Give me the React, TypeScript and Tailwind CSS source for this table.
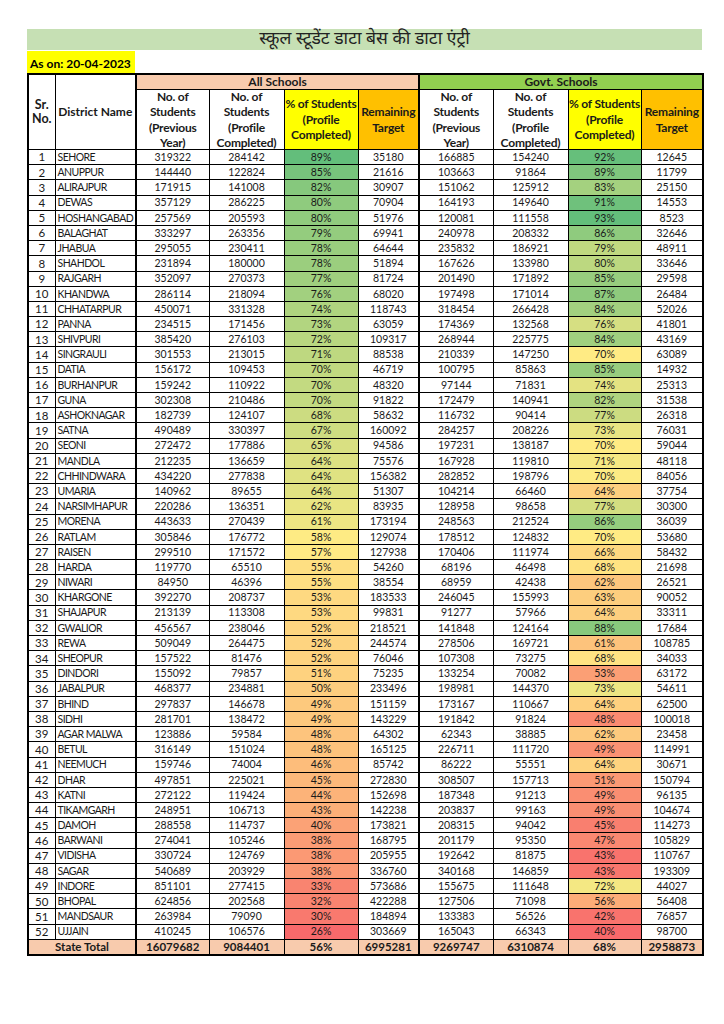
import React from "react";

type Row = [number, string, number, number, number, number, number, number, number, number];

const DATA: Row[] = [
  [1, "SEHORE", 319322, 284142, 89, 35180, 166885, 154240, 92, 12645],
  [2, "ANUPPUR", 144440, 122824, 85, 21616, 103663, 91864, 89, 11799],
  [3, "ALIRAJPUR", 171915, 141008, 82, 30907, 151062, 125912, 83, 25150],
  [4, "DEWAS", 357129, 286225, 80, 70904, 164193, 149640, 91, 14553],
  [5, "HOSHANGABAD", 257569, 205593, 80, 51976, 120081, 111558, 93, 8523],
  [6, "BALAGHAT", 333297, 263356, 79, 69941, 240978, 208332, 86, 32646],
  [7, "JHABUA", 295055, 230411, 78, 64644, 235832, 186921, 79, 48911],
  [8, "SHAHDOL", 231894, 180000, 78, 51894, 167626, 133980, 80, 33646],
  [9, "RAJGARH", 352097, 270373, 77, 81724, 201490, 171892, 85, 29598],
  [10, "KHANDWA", 286114, 218094, 76, 68020, 197498, 171014, 87, 26484],
  [11, "CHHATARPUR", 450071, 331328, 74, 118743, 318454, 266428, 84, 52026],
  [12, "PANNA", 234515, 171456, 73, 63059, 174369, 132568, 76, 41801],
  [13, "SHIVPURI", 385420, 276103, 72, 109317, 268944, 225775, 84, 43169],
  [14, "SINGRAULI", 301553, 213015, 71, 88538, 210339, 147250, 70, 63089],
  [15, "DATIA", 156172, 109453, 70, 46719, 100795, 85863, 85, 14932],
  [16, "BURHANPUR", 159242, 110922, 70, 48320, 97144, 71831, 74, 25313],
  [17, "GUNA", 302308, 210486, 70, 91822, 172479, 140941, 82, 31538],
  [18, "ASHOKNAGAR", 182739, 124107, 68, 58632, 116732, 90414, 77, 26318],
  [19, "SATNA", 490489, 330397, 67, 160092, 284257, 208226, 73, 76031],
  [20, "SEONI", 272472, 177886, 65, 94586, 197231, 138187, 70, 59044],
  [21, "MANDLA", 212235, 136659, 64, 75576, 167928, 119810, 71, 48118],
  [22, "CHHINDWARA", 434220, 277838, 64, 156382, 282852, 198796, 70, 84056],
  [23, "UMARIA", 140962, 89655, 64, 51307, 104214, 66460, 64, 37754],
  [24, "NARSIMHAPUR", 220286, 136351, 62, 83935, 128958, 98658, 77, 30300],
  [25, "MORENA", 443633, 270439, 61, 173194, 248563, 212524, 86, 36039],
  [26, "RATLAM", 305846, 176772, 58, 129074, 178512, 124832, 70, 53680],
  [27, "RAISEN", 299510, 171572, 57, 127938, 170406, 111974, 66, 58432],
  [28, "HARDA", 119770, 65510, 55, 54260, 68196, 46498, 68, 21698],
  [29, "NIWARI", 84950, 46396, 55, 38554, 68959, 42438, 62, 26521],
  [30, "KHARGONE", 392270, 208737, 53, 183533, 246045, 155993, 63, 90052],
  [31, "SHAJAPUR", 213139, 113308, 53, 99831, 91277, 57966, 64, 33311],
  [32, "GWALIOR", 456567, 238046, 52, 218521, 141848, 124164, 88, 17684],
  [33, "REWA", 509049, 264475, 52, 244574, 278506, 169721, 61, 108785],
  [34, "SHEOPUR", 157522, 81476, 52, 76046, 107308, 73275, 68, 34033],
  [35, "DINDORI", 155092, 79857, 51, 75235, 133254, 70082, 53, 63172],
  [36, "JABALPUR", 468377, 234881, 50, 233496, 198981, 144370, 73, 54611],
  [37, "BHIND", 297837, 146678, 49, 151159, 173167, 110667, 64, 62500],
  [38, "SIDHI", 281701, 138472, 49, 143229, 191842, 91824, 48, 100018],
  [39, "AGAR MALWA", 123886, 59584, 48, 64302, 62343, 38885, 62, 23458],
  [40, "BETUL", 316149, 151024, 48, 165125, 226711, 111720, 49, 114991],
  [41, "NEEMUCH", 159746, 74004, 46, 85742, 86222, 55551, 64, 30671],
  [42, "DHAR", 497851, 225021, 45, 272830, 308507, 157713, 51, 150794],
  [43, "KATNI", 272122, 119424, 44, 152698, 187348, 91213, 49, 96135],
  [44, "TIKAMGARH", 248951, 106713, 43, 142238, 203837, 99163, 49, 104674],
  [45, "DAMOH", 288558, 114737, 40, 173821, 208315, 94042, 45, 114273],
  [46, "BARWANI", 274041, 105246, 38, 168795, 201179, 95350, 47, 105829],
  [47, "VIDISHA", 330724, 124769, 38, 205955, 192642, 81875, 43, 110767],
  [48, "SAGAR", 540689, 203929, 38, 336760, 340168, 146859, 43, 193309],
  [49, "INDORE", 851101, 277415, 33, 573686, 155675, 111648, 72, 44027],
  [50, "BHOPAL", 624856, 202568, 32, 422288, 127506, 71098, 56, 56408],
  [51, "MANDSAUR", 263984, 79090, 30, 184894, 133383, 56526, 42, 76857],
  [52, "UJJAIN", 410245, 106576, 26, 303669, 165043, 66343, 40, 98700],
];

const RED = [248, 105, 107];
const YEL = [255, 235, 132];
const GRN = [99, 190, 123];

function mix(a: number[], b: number[], t: number) {
  const c = a.map((v, i) => Math.round(v + (b[i] - v) * Math.max(0, Math.min(1, t))));
  return `rgb(${c[0]},${c[1]},${c[2]})`;
}

function makeScale(values: number[]) {
  const s = [...values].sort((x, y) => x - y);
  const n = s.length;
  const min = s[0];
  const max = s[n - 1];
  const pos = (n - 1) * 0.5;
  const lo = Math.floor(pos);
  const mid = s[lo] + (s[Math.min(lo + 1, n - 1)] - s[lo]) * (pos - lo);
  return (v: number) =>
    v <= mid ? mix(RED, YEL, (v - min) / (mid - min)) : mix(YEL, GRN, (v - mid) / (max - mid));
}

const allScale = makeScale(DATA.map((r) => r[3] / r[2]));
const govScale = makeScale(DATA.map((r) => r[7] / r[6]));

const td = "border border-black p-0 text-center align-middle whitespace-nowrap";

function HeadCell({ lines, bg, thick }: { lines: string[]; bg: string; thick?: boolean }) {
  return (
    <th className={`border border-black p-0 font-bold align-middle ${bg} ${thick ? "border-r-2" : ""}`}>
      <div className="h-[59px] overflow-hidden flex flex-col justify-center items-center text-[12px] leading-[15.5px] tracking-[-0.2px]">
        {lines.map((l, i) => (
          <div key={i} className="whitespace-nowrap">
            {l}
          </div>
        ))}
      </div>
    </th>
  );
}

export default function App() {
  return (
    <div className="min-h-[1024px] w-[724px] bg-white text-[#1a1a1a] font-[family-name:Lato,'Noto_Sans',sans-serif]">
      <div className="pt-[29px] pl-[27px] w-[702px]">
        <div className="h-[21px] w-[675px] bg-[#C6E0B4] flex items-center justify-center text-[17.5px] leading-none text-[#222] font-[family-name:'Noto_Sans_Devanagari','Lohit_Devanagari','FreeSans','Noto_Sans',Lato,sans-serif]">
          स्कूल स्टूडेंट डाटा बेस की डाटा एंट्री
        </div>
        <div className="mt-[1px] h-[22px] w-[108px] bg-[#FFFF00] flex items-end pb-[3px] pl-[3px] text-[12px] font-bold leading-none text-black whitespace-nowrap">
          As on: 20-04-2023
        </div>
        <table className="table-fixed border-collapse border-2 border-black w-[675px]">
          <colgroup>
            <col className="w-[27px]" />
            <col className="w-[81px]" />
            <col className="w-[73px]" />
            <col className="w-[75px]" />
            <col className="w-[74px]" />
            <col className="w-[61px]" />
            <col className="w-[74px]" />
            <col className="w-[75px]" />
            <col className="w-[73px]" />
            <col className="w-[62px]" />
          </colgroup>
          <thead>
            <tr className="h-[15px]">
              <th rowSpan={2} className="border border-black p-0 bg-white text-[12.5px] font-bold leading-[14.5px] align-middle">
                Sr.
                <br />
                No.
              </th>
              <th rowSpan={2} className="border border-black border-r-2 p-0 bg-white text-[12px] font-bold leading-[14px] align-middle whitespace-nowrap">
                District Name
              </th>
              <th colSpan={4} className="border border-black border-r-2 p-0 bg-[#F8CBAD] text-[12px] font-bold leading-[14px]">
                All Schools
              </th>
              <th colSpan={4} className="border border-black p-0 bg-[#92D050] text-[12px] font-bold leading-[14px]">
                Govt. Schools
              </th>
            </tr>
            <tr className="h-[60px]">
              <HeadCell lines={["No. of", "Students", "(Previous", "Year)"]} bg="bg-white" />
              <HeadCell lines={["No. of", "Students", "(Profile", "Completed)"]} bg="bg-white" />
              <HeadCell lines={["% of Students", "(Profile", "Completed)"]} bg="bg-[#FFFF00]" />
              <HeadCell lines={["Remaining", "Target"]} bg="bg-[#FFC000]" thick />
              <HeadCell lines={["No. of", "Students", "(Previous", "Year)"]} bg="bg-white" />
              <HeadCell lines={["No. of", "Students", "(Profile", "Completed)"]} bg="bg-white" />
              <HeadCell lines={["% of Students", "(Profile", "Completed)"]} bg="bg-[#FFFF00]" />
              <HeadCell lines={["Remaining", "Target"]} bg="bg-[#FFC000]" />
            </tr>
          </thead>
          <tbody className="text-[10.5px] leading-none">
            {DATA.map((r) => (
              <tr key={r[0]} className="h-[15.19px]">
                <td className={`${td} text-[11.5px]`}>{r[0]}</td>
                <td className={`${td} border-r-2 text-left pl-[2px] overflow-hidden text-[10.5px] tracking-[-0.55px]`}>{r[1]}</td>
                <td className={td}>{r[2]}</td>
                <td className={td}>{r[3]}</td>
                <td className={td} style={{ backgroundColor: allScale(r[3] / r[2]) }}>
                  {r[4]}%
                </td>
                <td className={`${td} border-r-2`}>{r[5]}</td>
                <td className={td}>{r[6]}</td>
                <td className={td}>{r[7]}</td>
                <td className={td} style={{ backgroundColor: govScale(r[7] / r[6]) }}>
                  {r[8]}%
                </td>
                <td className={td}>{r[9]}</td>
              </tr>
            ))}
            <tr className="h-[16px] bg-[#F8CBAD] font-bold text-[11.5px]">
              <td colSpan={2} className={`${td} border-r-2`}>
                State Total
              </td>
              <td className={td}>16079682</td>
              <td className={td}>9084401</td>
              <td className={td}>56%</td>
              <td className={`${td} border-r-2`}>6995281</td>
              <td className={td}>9269747</td>
              <td className={td}>6310874</td>
              <td className={td}>68%</td>
              <td className={td}>2958873</td>
            </tr>
          </tbody>
        </table>
      </div>
    </div>
  );
}
